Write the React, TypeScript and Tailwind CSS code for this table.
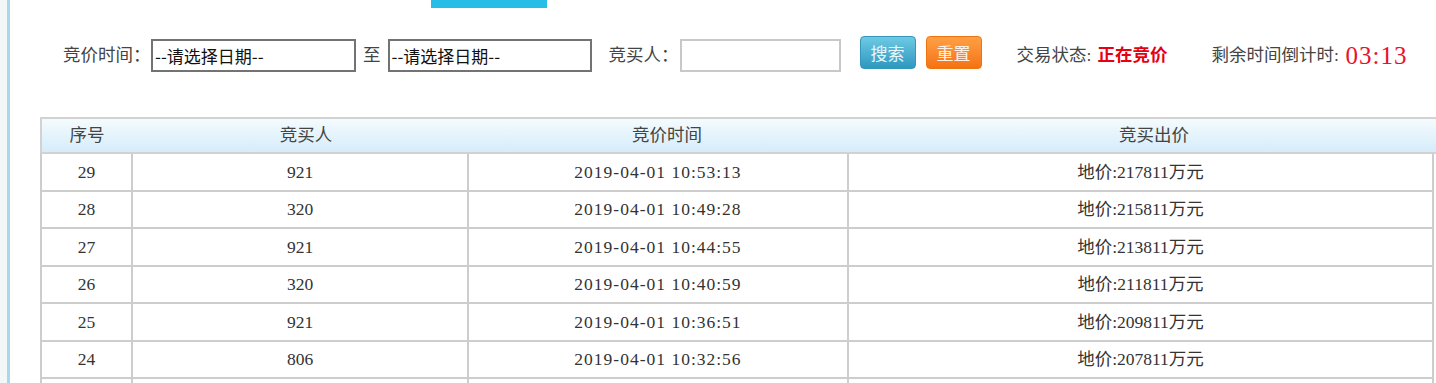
import React from "react";

const rows = [
  { no: "29", buyer: "921", time: "2019-04-01 10:53:13", price: "地价:217811万元" },
  { no: "28", buyer: "320", time: "2019-04-01 10:49:28", price: "地价:215811万元" },
  { no: "27", buyer: "921", time: "2019-04-01 10:44:55", price: "地价:213811万元" },
  { no: "26", buyer: "320", time: "2019-04-01 10:40:59", price: "地价:211811万元" },
  { no: "25", buyer: "921", time: "2019-04-01 10:36:51", price: "地价:209811万元" },
  { no: "24", buyer: "806", time: "2019-04-01 10:32:56", price: "地价:207811万元" },
  // next row only peeks in at the bottom edge
  { no: "", buyer: "", time: "", price: "" },
];

function App() {
  return (
    <div className="flex h-[383px] w-[1436px] overflow-hidden bg-white font-['Liberation_Serif','Noto_Sans_CJK_SC',serif] text-[17.5px] text-[#333]">
      <div className="w-[7px] shrink-0 bg-[#f3f7f7]" />
      <div className="w-[3px] shrink-0 bg-[#a3dce6]" />

      <div className="min-w-0 flex-1">
        <div className="ml-[421px] h-[8px] w-[116px] bg-[#26bde6]" />

        {/* search bar */}
        <div className="mt-[31px] flex h-[33px] items-center whitespace-nowrap pl-[53px] text-[#444]">
          <span className="w-[88px]">竞价时间：</span>
          <input
            type="text"
            readOnly
            defaultValue="--请选择日期--"
            className="h-[33px] w-[205px] border-2 border-[#737373] bg-white px-[2px] font-['Noto_Sans_CJK_SC',sans-serif] text-[17px] text-[#111] focus:outline-none"
          />
          <span className="mx-[7px]">至</span>
          <input
            type="text"
            readOnly
            defaultValue="--请选择日期--"
            className="h-[33px] w-[204px] border-2 border-[#737373] bg-white px-[2px] font-['Noto_Sans_CJK_SC',sans-serif] text-[17px] text-[#111] focus:outline-none"
          />
          <span className="ml-[17px] w-[71px]">竞买人：</span>
          <input
            type="text"
            className="h-[33px] w-[161px] border-2 border-[#c8c8c8] bg-white px-[2px] focus:outline-none"
          />
          <button
            type="button"
            className="mb-[6px] ml-[19px] h-[33px] w-[56px] rounded-[4px] border border-[#3597bb] bg-linear-to-b from-[#6ccae4] to-[#2c98bf] font-['Noto_Sans_CJK_SC',sans-serif] text-[17px] text-[#e8f7fc]"
          >
            搜索
          </button>
          <button
            type="button"
            className="mb-[6px] ml-[10px] h-[33px] w-[56px] rounded-[4px] border border-[#ee7412] bg-linear-to-b from-[#ffa043] to-[#f47210] font-['Noto_Sans_CJK_SC',sans-serif] text-[17px] text-[#fff0e2]"
          >
            重置
          </button>
          <span className="ml-[35px] w-[81px]">交易状态:</span>
          <span className="font-bold text-[#e60012]">正在竞价</span>
          <span className="ml-[44px] w-[134px]">剩余时间倒计时:</span>
          <span className="text-[25px] tracking-[1px] text-[#e8112d]">03:13</span>
        </div>

        {/* bid table */}
        <div className="ml-[30px] mt-[45px]">
          <div className="flex h-[37px] w-[1420px] border-y-2 border-l-2 border-[#d2d2d2] bg-linear-to-b from-[#f4fbfe] to-[#d5ecfa] text-[#444]">
            <div className="flex w-[90px] items-center justify-center">序号</div>
            <div className="flex w-[348px] items-center justify-center">竞买人</div>
            <div className="flex w-[374px] items-center justify-center">竞价时间</div>
            <div className="flex w-[600px] items-center justify-center">竞买出价</div>
          </div>
          {rows.map((r, i) => (
            <div
              key={i}
              className="flex h-[37.5px] w-[1394px] border-b-2 border-l-2 border-[#cdcdcd]"
            >
              <div className="flex w-[91px] items-center justify-center border-r-2 border-[#cdcdcd]">
                {r.no}
              </div>
              <div className="flex w-[336px] items-center justify-center border-r-2 border-[#cdcdcd]">
                {r.buyer}
              </div>
              <div className="flex w-[380px] items-center justify-center border-r-2 border-[#cdcdcd] tracking-[1px]">
                {r.time}
              </div>
              <div className="flex w-[585px] items-center justify-center border-r-2 border-[#cdcdcd]">
                {r.price}
              </div>
            </div>
          ))}
        </div>
      </div>
    </div>
  );
}

export default App;
